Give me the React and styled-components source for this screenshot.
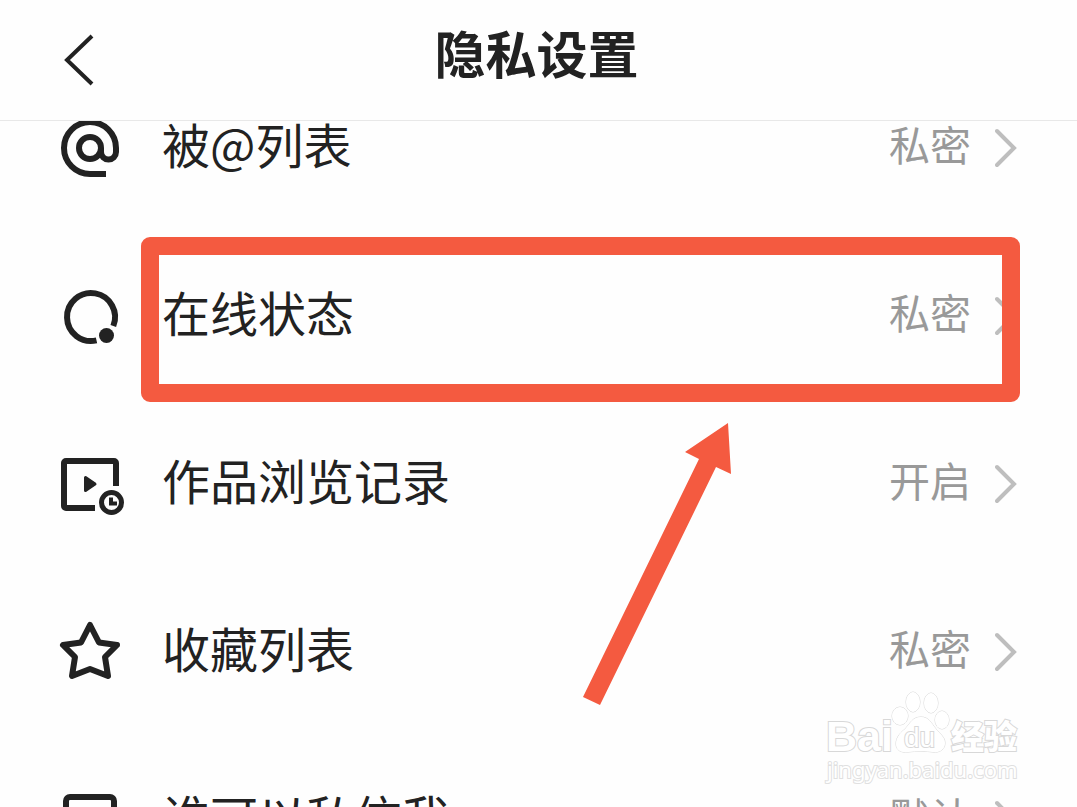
import React from 'react';
import styled, { createGlobalStyle } from 'styled-components';

const GlobalStyle = createGlobalStyle`
  * {
    box-sizing: border-box;
  }
  body {
    margin: 0;
    background: #fefefe;
    color: #222;
    font-family: 'Noto Sans CJK SC', sans-serif;
  }
`;

const Page = styled.div`
  position: relative;
  display: flex;
  flex-direction: column;
  height: 100vh;
  overflow: hidden;
`;

const Header = styled.header`
  display: grid;
  grid-template-columns: 40px 1fr 44px;
  align-items: center;
  flex: none;
  height: 121px;
  padding: 0 60px;
  border-bottom: 1px solid #e8e8e8;
`;

const BackButton = styled.button`
  display: flex;
  padding: 0;
  border: 0;
  background: none;
  color: inherit;
  cursor: pointer;
`;

const Title = styled.h1`
  margin: 0;
  padding-bottom: 16px;
  font-size: 51px;
  font-weight: 700;
  line-height: 72px;
  text-align: center;
`;

const Scroller = styled.main`
  flex: 1;
  min-height: 0;
  overflow: hidden;
`;

// the list is scrolled part of the way under the header
const List = styled.ul`
  margin: -57px 0 0;
  padding: 0;
  list-style: none;
`;

const Item = styled.li`
  position: relative;
`;

const Row = styled.a`
  display: flex;
  align-items: center;
  height: 168px;
  padding: 0 60px;
  color: inherit;
  text-decoration: none;
`;

const Icon = styled.svg`
  flex: none;
  width: 64px;
  height: 64px;
  margin-right: 38px;
  overflow: visible;
  fill: none;
  stroke: #222;
  stroke-width: 6;
`;

const Label = styled.span`
  flex: 1;
  padding-bottom: 10px;
  font-size: 48px;
  line-height: 72px;
  white-space: nowrap;
`;

const Value = styled.span`
  margin-right: 24px;
  padding-bottom: 10px;
  color: #999;
  font-size: 41px;
  line-height: 72px;
`;

const Highlight = styled.div`
  position: absolute;
  top: 5px;
  right: 57px;
  bottom: -2px;
  left: 141px;
  border: 18px solid #f45a40;
  border-radius: 9px;
  pointer-events: none;
`;

const Pointer = styled.svg`
  position: absolute;
  top: 22px;
  left: 54%;
  z-index: 1;
  fill: #f45a40;
  pointer-events: none;
`;

const Watermark = styled.svg`
  position: absolute;
  right: 55px;
  bottom: 19px;
  fill: #fff;
  stroke: #d8d8d8;
  stroke-width: 2;
  paint-order: stroke;
  pointer-events: none;
`;

const AtIcon = () => (
  <Icon viewBox="0 0 64 64" aria-hidden="true">
    <circle cx="30" cy="32" r="11" />
    <path d="M46 58H30A26 26 0 1 1 56 32V36a7.5 7.5 0 0 1-15 0V32" />
  </Icon>
);

const OnlineIcon = () => (
  <Icon viewBox="0 0 64 64" aria-hidden="true">
    <path d="M53.3 42A24 24 0 1 0 36.5 56.4" />
    <circle cx="46.5" cy="51.5" r="7.5" fill="#222" stroke="none" />
  </Icon>
);

const HistoryIcon = () => (
  <Icon viewBox="0 0 64 64" aria-hidden="true">
    <path d="M35 56H6a2 2 0 0 1-2-2V11a2 2 0 0 1 2-2h48a2 2 0 0 1 2 2V34" />
    <path
      d="M25.5 25.5V38.5L35 32Z"
      fill="#222"
      strokeWidth="3"
      strokeLinejoin="round"
    />
    <circle cx="51.5" cy="50.5" r="10" strokeWidth="5" />
    <path d="M51 45.5V51.5H57" strokeWidth="4" />
  </Icon>
);

const StarIcon = () => (
  <Icon viewBox="0 0 64 64" strokeLinejoin="round" aria-hidden="true">
    <path d="M30 5L39 22.5L57 25L45 37L48 56L30 49L12 56L15 37L3 25L21 22.5Z" />
  </Icon>
);

const MessageIcon = () => (
  <Icon viewBox="0 0 64 64" aria-hidden="true">
    <rect x="6" y="9" width="48" height="46" rx="4" />
  </Icon>
);

const Chevron = () => (
  <svg width="22" height="40" viewBox="0 0 22 40" fill="none" aria-hidden="true">
    <path
      d="M2 3L19 20L2 37"
      stroke="#bebebe"
      strokeWidth="4"
      strokeLinecap="round"
    />
  </svg>
);

const rows = [
  { label: '被@列表', value: '私密', icon: AtIcon },
  { label: '在线状态', value: '私密', icon: OnlineIcon, highlighted: true },
  { label: '作品浏览记录', value: '开启', icon: HistoryIcon, pointed: true },
  { label: '收藏列表', value: '私密', icon: StarIcon },
  { label: '谁可以私信我', value: '默认', icon: MessageIcon }
];

const App = () => (
  <Page>
    <GlobalStyle />
    <Header>
      <BackButton type="button" aria-label="返回">
        <svg width="36" height="56" viewBox="0 0 36 56" fill="none">
          <path d="M32 4L7 28L32 52" stroke="#222" strokeWidth="4" />
        </svg>
      </BackButton>
      <Title>隐私设置</Title>
    </Header>
    <Scroller>
      <List>
        {rows.map(({ label, value, icon: RowIcon, highlighted, pointed }) => (
          <Item key={label}>
            <Row href="#">
              <RowIcon />
              <Label>{label}</Label>
              <Value>{value}</Value>
              <Chevron />
            </Row>
            {highlighted && <Highlight />}
            {pointed && (
              <Pointer width="150" height="284" viewBox="0 0 150 284">
                <path d="M146 1L103 30L117 37L1 275L18 283L134 45L149 52Z" />
              </Pointer>
            )}
          </Item>
        ))}
      </List>
    </Scroller>
    <Watermark width="200" height="100" viewBox="0 0 200 100">
      <text
        x="4"
        y="63"
        fontFamily="Liberation Sans, sans-serif"
        fontSize="43"
        fontWeight="700"
      >
        Bai
      </text>
      <g strokeWidth="1">
        <ellipse cx="91" cy="14" rx="7" ry="10" />
        <ellipse cx="109" cy="15" rx="7" ry="10" />
        <ellipse cx="78" cy="28" rx="8" ry="9" />
        <ellipse cx="120" cy="32" rx="7" ry="9" />
        <path d="M99 29C90 29 88 36 83 41C77 46 74 50 74 56C74 62 79 65 86 64C94 63 104 63 111 64C118 65 123 61 123 55C123 49 118 46 114 41C109 35 107 29 99 29Z" />
      </g>
      <text
        x="82"
        y="59"
        fontFamily="Liberation Sans, sans-serif"
        fontSize="28"
      >
        du
      </text>
      <text
        x="129"
        y="61"
        fontFamily="Noto Sans CJK SC, sans-serif"
        fontSize="33"
        fontWeight="900"
      >
        经验
      </text>
      <text
        x="5"
        y="90"
        fontFamily="Noto Sans, sans-serif"
        fontSize="22"
        stroke="#e0e0e0"
      >
        jingyan.baidu.com
      </text>
    </Watermark>
  </Page>
);

export default App;
